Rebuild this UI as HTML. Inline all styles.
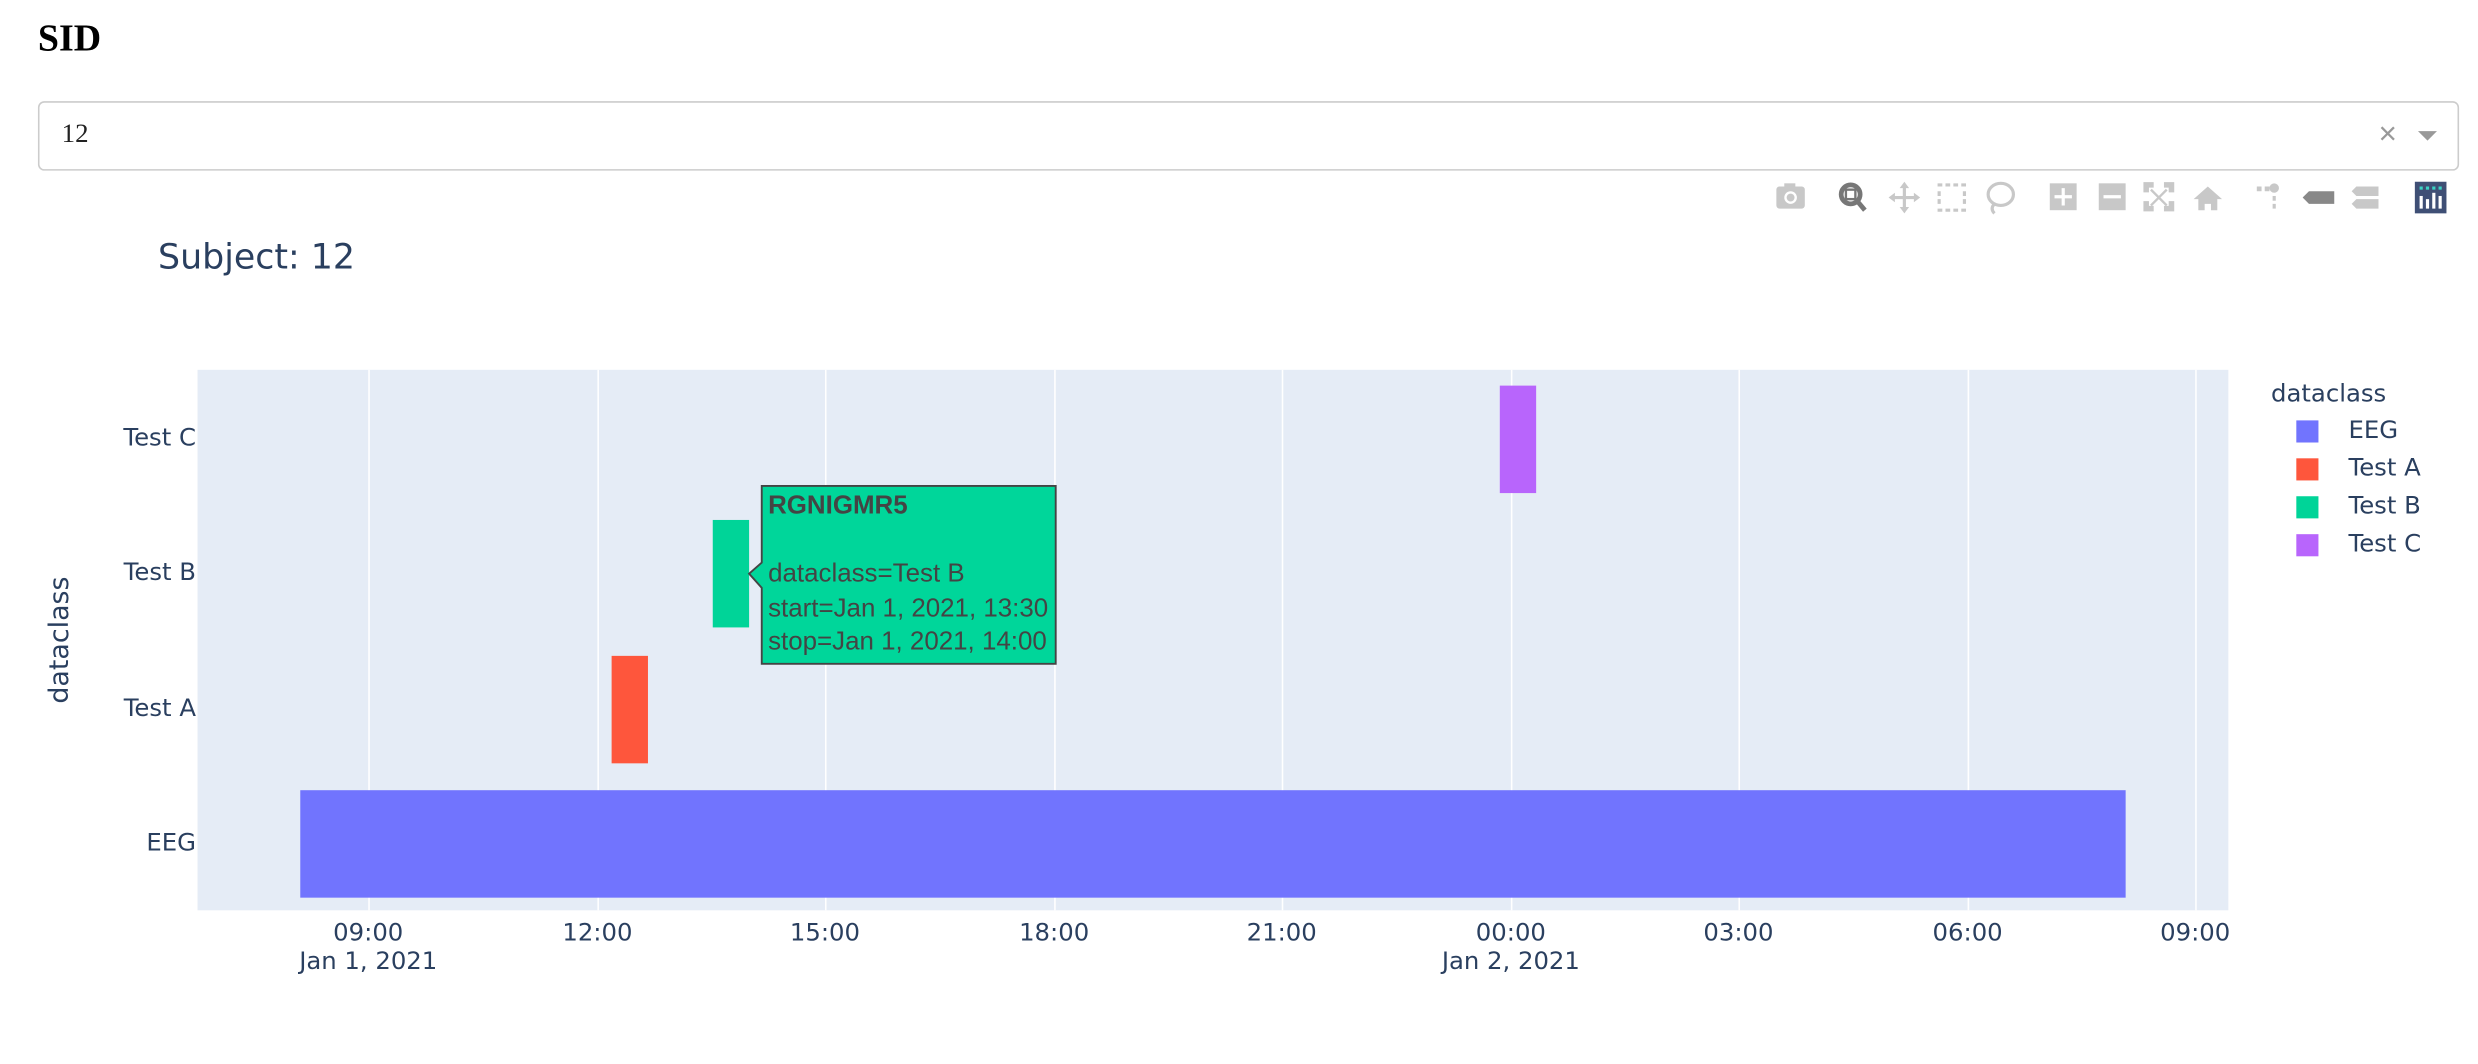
<!DOCTYPE html>
<html><head><meta charset="utf-8"><style>
html,body{margin:0;padding:0;background:#fff;width:2478px;height:1064px;overflow:hidden}
#w{position:absolute;left:0;top:0;width:1568px;height:673px;transform:scale(1.5804);transform-origin:0 0}
.a{position:absolute}
.s{font-family:"DejaVu Sans",sans-serif;color:#2a3f5f}
.tk{font-size:15.4px;white-space:nowrap}
.yt{right:calc(1568px - 124px);text-align:right}
.xt{transform:translateX(-50%);text-align:center;line-height:18px}
.g{position:absolute;top:234px;width:1px;height:342px;background:#fff}
</style></head><body><div id="w">
<div class="a" style="left:24px;top:12px;font:bold 24px 'Liberation Serif',serif;color:#000">SID</div>
<div class="a" style="left:24px;top:64px;width:1530px;height:42px;border:1px solid #ccc;border-radius:4px"></div>
<div class="a" style="left:39px;top:75px;font:17px 'Liberation Serif',serif;color:#222">12</div>
<div class="a" style="left:1505px;top:74px;font:20px 'Liberation Sans',sans-serif;color:#999">×</div>
<div class="a" style="left:1530px;top:83px;width:0;height:0;border-left:6px solid transparent;border-right:6px solid transparent;border-top:6px solid #999"></div>
<svg class="a" style="left:1120px;top:113px" width="440" height="24" viewBox="0 0 440 24">
<g fill="#c8c8c8">
<rect x="4" y="5" width="18" height="14" rx="2"/><rect x="9" y="3" width="7" height="4"/><circle cx="13" cy="12" r="4" fill="#fff"/><circle cx="13" cy="12" r="2.5"/>
<path d="M85 2l3 4h-2v5h5v-2l4 3-4 3v-2h-5v5h2l-3 4-3-4h2v-5h-5v2l-4-3 4-3v2h5v-5h-2z"/>
<path d="M106 3h3v2h-3zM111 3h3v2h-3zM116 3h3v2h-3zM121 3h3v2h-3zM106 8h2v3h-2zM106 13h2v3h-2zM122 8h2v3h-2zM122 13h2v3h-2zM106 19h3v2h-3zM111 19h3v2h-3zM116 19h3v2h-3zM121 19h3v2h-3z"/>
<rect x="177" y="3" width="17" height="17"/><rect x="208" y="3" width="17" height="17"/>
<path d="M237 3h5v2h-3v3h-2zM250 3h5v5h-2v-3h-3zM237 15h2v3h3v2h-5zM253 15h2v5h-5v-2h3zM241 7l10 10M251 7l-10 10" stroke="#c8c8c8" stroke-width="1.5"/>
<path d="M277 5l-9 8h3v7h4v-4h4v4h4v-7h3z"/>
<rect x="308" y="5" width="3" height="3"/><rect x="313" y="5" width="3" height="3"/><circle cx="319" cy="6" r="3"/><rect x="318" y="11" width="2" height="3"/><rect x="318" y="16" width="2" height="3"/>
<path d="M371 5h14v6h-14l-3-3zM371 13h14v6h-14l-3-3z"/>
</g>
<path d="M341 8h16v8h-16l-4-4z" fill="#888"/>
<circle cx="51" cy="10" r="6" fill="none" stroke="#777" stroke-width="3"/><rect x="48" y="7" width="6" height="6" fill="none" stroke="#777" stroke-width="1.5"/><path d="M55 14l5 6" stroke="#777" stroke-width="3"/>
<ellipse cx="146" cy="10" rx="8" ry="7" fill="none" stroke="#c8c8c8" stroke-width="2"/><path d="M142 16q-3 3 0 6" fill="none" stroke="#c8c8c8" stroke-width="2"/>
<path d="M180 11.5h11" stroke="#fff" stroke-width="2"/><path d="M185.5 6v11" stroke="#fff" stroke-width="2"/><path d="M211 11.5h11" stroke="#fff" stroke-width="2"/>
<rect x="408" y="2" width="20" height="20" fill="#3f4f75"/>
<g fill="#fff"><rect x="411" y="11" width="2" height="8"/><rect x="415" y="13" width="2" height="6"/><rect x="419" y="9" width="2" height="10"/><rect x="423" y="11" width="2" height="8"/></g>
<g fill="#3cd3c4"><rect x="411" y="5" width="2" height="2"/><rect x="415" y="5" width="2" height="2"/><rect x="419" y="5" width="2" height="2"/><rect x="423" y="5" width="2" height="2"/></g>
</svg>
<div class="a s" style="left:100px;top:151px;font-size:22px">Subject: 12</div>
<div class="a" style="left:125px;top:234px;width:1285px;height:342px;background:#e5ecf6"></div>
<div class="g" style="left:233px"></div><div class="g" style="left:378px"></div><div class="g" style="left:522px"></div><div class="g" style="left:667px"></div><div class="g" style="left:811px"></div><div class="g" style="left:956px"></div><div class="g" style="left:1100px"></div><div class="g" style="left:1245px"></div><div class="g" style="left:1389px"></div>
<div class="a" style="left:190px;top:500px;width:1155px;height:68px;background:#7174fe"></div>
<div class="a" style="left:387px;top:415px;width:23px;height:68px;background:#fe563c"></div>
<div class="a" style="left:451px;top:329px;width:23px;height:68px;background:#00d498"></div>
<div class="a" style="left:949px;top:244px;width:23px;height:68px;background:#b865fc"></div>
<svg class="a" style="left:472px;top:306px" width="200" height="118"><path d="M10 1.5H196V114H10V66L2 57L10 50Z" fill="#00d69a" stroke="#444" stroke-width="1.2"/></svg>
<div class="a" style="left:486px;top:310px;font:16.4px 'Liberation Sans',Arial,sans-serif;color:#444;line-height:21.5px;white-space:nowrap"><b>RGNIGMR5</b><br><br>dataclass=Test B<br>start=Jan 1, 2021, 13:30<br>stop=Jan 1, 2021, 14:00</div>
<div class="a s tk yt" style="top:268px">Test C</div>
<div class="a s tk yt" style="top:353px">Test B</div>
<div class="a s tk yt" style="top:439px">Test A</div>
<div class="a s tk yt" style="top:524px">EEG</div>
<div class="a s" style="left:38px;top:405px;font-size:17px;transform:translate(-50%,-50%) rotate(-90deg)">dataclass</div>
<div class="a s tk xt" style="left:233px;top:581px">09:00<br>Jan 1, 2021</div>
<div class="a s tk xt" style="left:378px;top:581px">12:00</div>
<div class="a s tk xt" style="left:522px;top:581px">15:00</div>
<div class="a s tk xt" style="left:667px;top:581px">18:00</div>
<div class="a s tk xt" style="left:811px;top:581px">21:00</div>
<div class="a s tk xt" style="left:956px;top:581px">00:00<br>Jan 2, 2021</div>
<div class="a s tk xt" style="left:1100px;top:581px">03:00</div>
<div class="a s tk xt" style="left:1245px;top:581px">06:00</div>
<div class="a s tk xt" style="left:1389px;top:581px">09:00</div>
<div class="a s tk" style="left:1437px;top:240px">dataclass</div>
<div class="a" style="left:1453px;top:266px;width:14px;height:14px;background:#7174fe"></div><div class="a s tk" style="left:1486px;top:263px">EEG</div>
<div class="a" style="left:1453px;top:290px;width:14px;height:14px;background:#fe563c"></div><div class="a s tk" style="left:1486px;top:287px">Test A</div>
<div class="a" style="left:1453px;top:314px;width:14px;height:14px;background:#00d498"></div><div class="a s tk" style="left:1486px;top:311px">Test B</div>
<div class="a" style="left:1453px;top:338px;width:14px;height:14px;background:#b865fc"></div><div class="a s tk" style="left:1486px;top:335px">Test C</div>
</div></body></html>
